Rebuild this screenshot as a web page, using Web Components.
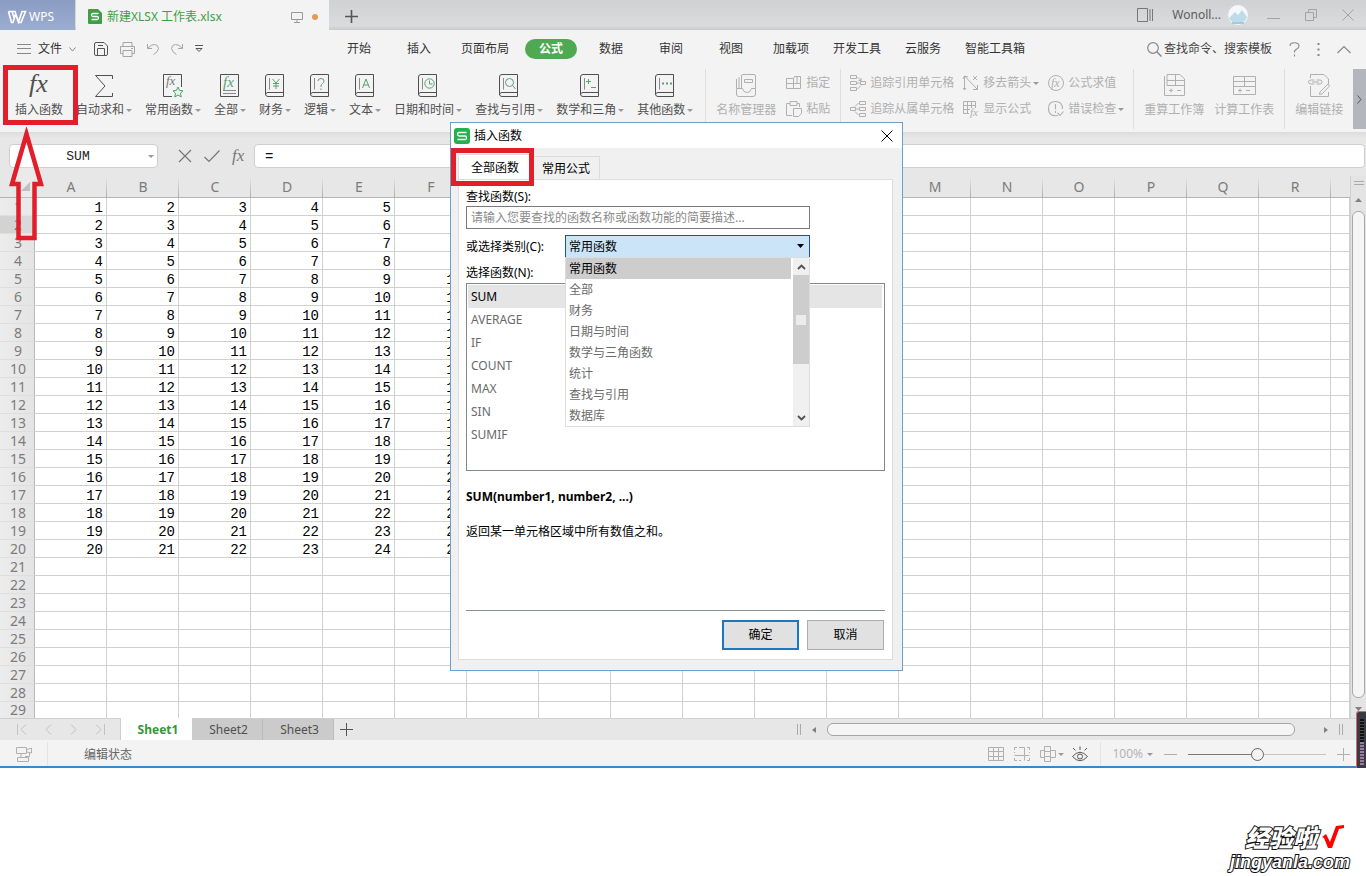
<!DOCTYPE html>
<html lang="zh-CN">
<head>
<meta charset="utf-8">
<title>新建XLSX 工作表.xlsx</title>
<style>
html, body { margin: 0; padding: 0; background: #fff; }
body { font: 12px/16px "Noto Sans", "Noto Sans CJK SC", sans-serif; color: #333; overflow-x: hidden; }
</style>
</head>
<body>
<wps-app></wps-app>
<page-mark></page-mark>

<script>
const BASE = `
*, *::before, *::after { box-sizing: border-box; }
button, input, select { font: inherit; color: inherit; margin: 0; padding: 0; border: 0; background: none; outline: none; border-radius: 0; }
button { cursor: pointer; white-space: nowrap; }
ul { list-style: none; margin: 0; padding: 0; }
ui-icon { flex: none; }
`;
function define(name, css, html) {
  customElements.define(name, class extends HTMLElement {
    constructor() {
      super();
      this.attachShadow({ mode: 'open' });
    }
    connectedCallback() {
      if (this.shadowRoot.childNodes.length) return;
      const t = document.createElement('template');
      t.innerHTML = `<style>${BASE}${css}</style>` + (typeof html === 'function' ? html(this) : html);
      this.shadowRoot.append(t.content.cloneNode(true));
    }
  });
}

/* ---------- icons: [width, height, markup] ---------- */
const book = inner => `<path d="M18.500 .5V22.500H3Q.5 22.500 .5 20V3Q.5 .5 3 .5ZM.5 20.500Q.8 18.500 3 18.500H18.500"/><path d="M4.500 4V15.500" stroke="#8a8a8a"/><g stroke="#5b9f75">${inner}</g>`;
const gtext = (t, x, y, s, extra = '') => `<text x="${x}" y="${y}" font-size="${s}" fill="currentColor" stroke="none" ${extra}>${t}</text>`;
const FX = 'font-family="Liberation Serif" font-style="italic"';
const ICONS = {
  wps: [18, 14, '<g stroke="#fff" stroke-width="1.600"><path d="M.5 1.500H7L10.500 12L14 1.500H17.500L13 12.500H10.500L7.500 4L5 12.500H3.500L.5 1.500M4 1.500L6.500 9"/></g>'],
  sheetfile: [14, 15, '<path d="M1 0H10L14 4V14Q14 15 13 15H1Q0 15 0 14V1Q0 0 1 0Z" fill="#3f9f45" stroke="none"/><path d="M10.500 4.500H5Q3.500 4.500 3.500 6T5 7.500H9Q10.500 7.500 10.500 9T9 10.500H3.500" stroke="#fff" stroke-width="1.300"/>'],
  monitor: [12, 12, '<path d="M.5 1.500H11.500V8.500H.5ZM6 8.500V11M3 11.500H9"/>'],
  plus: [13, 13, '<path d="M6.500 0V13M0 6.500H13" stroke-width="1.600"/>'],
  thinplus: [13, 13, '<path d="M6.500 0V13M0 6.500H13"/>'],
  panel: [16, 14, '<path d="M.5 .5H10.500V13.500H.5ZM13 1V13M15.500 1V13"/>'],
  avatar: [20, 20, '<circle cx="10" cy="10" r="10" fill="#f4f8fa" stroke="none"/><path d="M1 13L7 7L10 10L14 5L19 12Q17 18 10 18T1 13Z" fill="#bddbe8" stroke="none"/><path d="M4 18H16" stroke="#a8c9d8" stroke-width="2"/>'],
  min: [13, 13, '<path d="M0 9.500H13"/>'],
  restore: [12, 12, '<path d="M.5 3.500H8.500V11.500H.5ZM3.500 3.500V.5H11.500V8.500H8.500"/>'],
  close: [12, 12, '<path d="M.5 .5L11.500 11.500M11.500 .5L.5 11.500"/>'],
  burger: [14, 12, '<path d="M0 1.500H14M0 5.500H14M0 10.500H14"/>'],
  chev: [7, 5, '<path d="M.5 .5L3.500 4L6.500 .5"/>'],
  save: [14, 14, '<path d="M.5 2Q.5 .5 2 .5H10L13.500 4V12Q13.500 13.500 12 13.500H2Q.5 13.500 .5 12ZM3.500 13.500V6.500H10.500V13.500M4 3.500H9"/>'],
  print: [15, 15, '<path d="M3 4.500V.5H12V4.500M3 11.500H.5V4.500H14.500V11.500H12M3 8.500H12V14.500H3ZM11 6.500H13"/>'],
  undo: [12, 12, '<path d="M.5 1V5.500H5M1 5Q4 1.500 7.500 1.500T11.500 5.500Q11 9 6.500 11.500"/>'],
  redo: [12, 12, '<path d="M11.500 1V5.500H7M11 5Q8 1.500 4.500 1.500T.5 5.500Q1 9 5.500 11.500"/>'],
  more: [8, 8, '<path d="M0 .5H8M1 3.500H7L4 6.500Z"/>'],
  search: [15, 15, '<circle cx="6" cy="6" r="5.300" stroke-width="1.200"/><path d="M10 10L14.500 14.500" stroke-width="1.500"/>'],
  help: [11, 15, '<path d="M1 4Q1 .7 5.500 .7T10 4Q10 6 7.500 7.200T5.500 10.500M5.500 12.500V14.500" stroke-width="1.100"/>'],
  dots: [3, 13, '<path d="M1.500 0V2M1.500 5.500V7.500M1.500 11V13" stroke-width="2"/>'],
  up: [14, 9, '<path d="M.5 8L7 1.500L13.500 8" stroke-width="1.200"/>'],
  fx: [26, 24, gtext('fx', 3, 18, 26, FX)],
  fxs: [16, 14, gtext('fx', 0, 12, 17, FX)],
  sum: [20, 24, '<path d="M18.500 5V1.500H1.500L11 12L1.500 22.500H18.500V19"/>'],
  common: [20, 24, '<path d="M9 22.500H.5V.5H18.500V13"/><g color="#777">' + gtext('fx', 3, 11, 13, FX) + '</g><path d="M15 13L16.600 16.400L20 16.800L17.500 19.200L18.200 23L15 21L11.800 23L12.500 19.200L10 16.800L13.400 16.400Z" stroke="#4f9f6c" fill="#e6f3ea"/>'],
  all: [20, 24, '<path d="M.5 .5H18.500V22.500H.5Z"/><path d="M3 16.500H16M3 19.500H16" stroke="#888"/><g color="#5b9f75">' + gtext('fx', 3, 13, 15, FX) + '</g>'],
  money: [20, 24, book('<path d="M7.500 5L11 9L14.500 5M11 9V15M8 9.500H14M8 12H14"/>')],
  logic: [20, 24, book('<path d="M8 7Q8 4.500 11 4.500T14 7Q14 8.500 12.500 9.500T11 12V13M11 14.500V16"/>')],
  textb: [20, 24, book('<path d="M7.500 14L11 5L14.500 14M8.500 11H13.500"/>')],
  clock: [20, 24, book('<circle cx="11.500" cy="9.500" r="4.700"/><path d="M11.500 6.500V10H14.500"/>')],
  lookup: [20, 24, book('<circle cx="10.500" cy="8.500" r="4"/><path d="M13.500 11.500L16.500 15"/>')],
  math: [20, 24, book('<path d="M6 7.500H11M8.500 5V10M11 13.500H16"/>')],
  other: [20, 24, book('<path d="M7 9.500H9M11 9.500H13M15 9.500H17" stroke-width="2"/>')],
  names: [20, 24, '<path d="M.5 5V14M3 3V14M5.500 14V2Q5.500 .5 7 .5H18Q19.500 .5 19.500 2V20Q19.500 22.500 17 22.500H2.500Q.5 22.500 .5 20V14.500H6.500Q7.500 18.500 11 18.500T15.500 14.500H19.500M8.500 5.500H16.500V8.500H8.500Z"/>'],
  assign: [16, 16, '<path d="M7.500 3.500H.5V13.500H14.500V8.500M.5 8.500H14.500V1.500H8.500L7.500 3.500V13.500M11 1.500V8.500"/>'],
  paste: [16, 16, '<path d="M4 2.500H.5V14.500H6M11 2.500H13.500V6M4 .5H11V4.500H4ZM7.500 7.500H15.500V12.500L12.500 15.500H7.500Z"/>'],
  prec: [16, 16, '<path d="M.5 .5H6.500V3.500H.5ZM.5 6.500H6.500V9.500H.5ZM.5 12.500H6.500V15.500H.5ZM10.500 6.500H15.500V9.500H10.500ZM7.500 2L11 5.500M11 3V5.500H8.500M7.500 14L11 10.500M7 8H10"/>'],
  dep: [16, 16, '<path d="M9.500 .5H15.500V3.500H9.500ZM9.500 6.500H15.500V9.500H9.500ZM9.500 12.500H15.500V15.500H9.500ZM.5 6.500H5.500V9.500H.5ZM8.500 2L5 5.500M8.500 14L5 10.500M6 8H9"/>'],
  arrows: [16, 16, '<path d="M1.500 15V1L14.500 14.500M0 4L1.500 1L5 2M0 13L1.500 15L3 13M14.500 10V14.500H10M10 1L14 5M14 1L10 5"/>'],
  showf: [16, 16, '<path d="M12.500 7V.5H.5V12.500H6M.5 4.500H12.500M.5 8.500H7M4.500 .5V12.500M8.500 .5V7"/>' + gtext('fx', 7, 15, 11, FX)],
  evalf: [16, 16, '<circle cx="8" cy="8" r="7.500"/>' + gtext('fx', 3, 12, 12, FX)],
  err: [16, 16, '<path d="M10 14.500Q.5 16 .5 7.500Q.5 .5 7.500 .5T14.500 8M7.500 3V8.500M7.500 10V12M9.500 12L12 14.500L15.500 10.500" stroke-width="1.100"/>'],
  calcbook: [21, 24, '<path d="M.5 20V2M3 .5H16L20.500 5V11.500H3ZM.5 11.500V21.500H20.500V11.500M11.500 .5V11.500M3 6.500H20.500M5 16.500H9M7 14.500V18.500M13 16.500H17"/>'],
  calcsheet: [23, 24, '<path d="M.5 2.500H22.500V20.500H.5ZM.5 7.500H22.500M.5 12.500H22.500M11.500 2.500V12.500M5 16.500H9M7 14.500V18.500M13 16.500H17"/>'],
  link: [22, 24, '<path d="M2.500 4V.5H16L20.500 5V10M2.500 12V22.500H20.500V18M6.500 6H3Q.5 6 .5 8T3 10H6.500M8.500 6H12Q14 6 14 8T12 10H8.500M4 8H11M12 18L20 10L21.500 12L14 20L11.500 20.500Z"/>'],
  right: [5, 9, '<path d="M.5 .5L4 4.500L.5 8.500"/>'],
  cross: [14, 14, '<path d="M1 1L13 13M13 1L1 13" stroke-width="1.200"/>'],
  check: [16, 14, '<path d="M.5 8L5 12.500L15.500 1.500" stroke-width="1.200"/>'],
  first: [10, 11, '<path d="M.5 0V11M9 .5L4 5.500L9 10.500"/>'],
  prev: [7, 11, '<path d="M6 .5L1 5.500L6 10.500"/>'],
  next: [7, 11, '<path d="M1 .5L6 5.500L1 10.500"/>'],
  last: [10, 11, '<path d="M9.500 0V11M1 .5L6 5.500L1 10.500"/>'],
  bars: [4, 11, '<path d="M.5 0V11M3.500 0V11"/>'],
  hbars: [10, 4, '<path d="M0 .5H10M0 3.500H10" stroke="#aaa"/>'],
  tl: [4, 6, '<path d="M4 0V6L0 3Z" fill="currentColor" stroke="none"/>'],
  tr: [4, 6, '<path d="M0 0V6L4 3Z" fill="currentColor" stroke="none"/>'],
  tu: [7, 4, '<path d="M0 4H7L3.500 0Z" fill="currentColor" stroke="none"/>'],
  td: [7, 4, '<path d="M0 0H7L3.500 4Z" fill="currentColor" stroke="none"/>'],
  macro: [16, 16, '<path d="M.5 1.500H10.500V7.500H.5ZM5 7.500V11M1.500 11.500H12.500V15.500H1.500ZM11 3.500L15.500 2V7L11 6M13.500 7V10.500H9"/>'],
  v1: [16, 14, '<path d="M.5 .5H15.500V13.500H.5ZM.5 4.500H15.500M.5 9.500H15.500M5.500 .5V13.500M10.500 .5V13.500"/>'],
  v2: [16, 14, '<path d="M.5 3V.5H3M5 .5H10.500V8.500H.5M.5 5V6M13 .5H15.500V3M10.500 8.500H15.500M15.500 5V6M.5 11V13.500H3M5 13.500H7M10.500 8.500V13.500M13 13.500H15.500V11"/>'],
  v3: [16, 16, '<path d="M4.500 .5H10.500V15.500H4.500ZM4.500 5.500H10.500M4.500 10.500H10.500M4 4.500H.5V11.500H4M11 4.500H15.500V11.500H11"/>'],
  eye: [16, 16, '<path d="M.5 10.500Q8 2 15.500 10.500Q8 19 .5 10.500Z"/><circle cx="8" cy="10.500" r="2.500"/><path d="M8 .5V4M1 2L3.500 4.500M15 2L12.500 4.500"/>'],
  minus: [13, 3, '<path d="M0 1.500H13"/>'],
  applogo: [16, 16, '<rect width="16" height="16" rx="3" fill="#22b14c" stroke="none"/><path d="M12.500 4.500H5Q3.500 4.500 3.500 6T5 8H11Q12.500 8 12.500 9.800T11 11.500H3.500" stroke="#fff" stroke-width="1.300"/>'],
  sup: [9, 6, '<path d="M1 5L4.500 1.500L8 5" stroke-width="1.800"/>'],
  sdown: [9, 6, '<path d="M1 1L4.500 4.500L8 1" stroke-width="1.800"/>']
};
define('ui-icon', ':host{display:inline-flex} svg{display:block;overflow:visible}', el => {
  const [w, h, m] = ICONS[el.getAttribute('name')];
  return `<svg width="${w}" height="${h}" viewBox="0 0 ${w} ${h}" fill="none" stroke="currentColor" aria-hidden="true">${m}</svg>`;
});
const ic = n => `<ui-icon name="${n}"></ui-icon>`;

/* ---------- title bar ---------- */
define('title-bar', `
:host { display: flex; height: 30px; background: linear-gradient(#d0d1d3, #dadbdc 85%, #c9cacb); color: #5d5d5d; }
button { display: flex; align-items: center; }
.home { width: 75px; padding: 3px 0 0 8px; gap: 3px; background: linear-gradient(#8b9cc3, #9badd0); color: #fff; }
.doc { width: 253px; background: #f3f3f3; color: #3f9f45; padding: 3px 11px 0 12px; margin-left: 1px; gap: 5px; }
.doc span { flex: 1; text-align: left; }
.doc ui-icon[name=monitor] { color: #999; }
i { width: 6px; height: 6px; border-radius: 3px; background: #e39a55; margin-left: 4px; }
.add { padding: 2px 16px 0; color: #555; }
.right { margin-left: auto; display: flex; align-items: center; padding-right: 12px; color: #777; }
.user { gap: 7px; margin: 0 19px; color: #5d5d5d; }
.win { display: flex; align-items: center; gap: 25px; color: #a3a3a3; }
`, `
<button class="home">${ic('wps')}<span>WPS</span></button>
<button class="doc">${ic('sheetfile')}<span>新建XLSX 工作表.xlsx</span>${ic('monitor')}<i></i></button>
<button class="add" aria-label="新建">${ic('plus')}</button>
<div class="right"><button aria-label="面板">${ic('panel')}</button>
<button class="user"><span>Wonoll...</span>${ic('avatar')}</button>
<div class="win"><button aria-label="最小化">${ic('min')}</button><button aria-label="还原">${ic('restore')}</button><button aria-label="关闭">${ic('close')}</button></div></div>`);

/* ---------- menu row ---------- */
define('menu-bar', `
:host { display: flex; height: 36px; padding-top: 2px; box-sizing: border-box; align-items: center; background: #f3f3f3; color: #333; }
button { display: flex; align-items: center; justify-content: center; height: 20px; }
.left { display: flex; align-items: center; width: 329px; padding-left: 17px; gap: 12px; color: #a5a5a5; flex: none; }
.file { gap: 7px; color: #333; margin-right: 6px; }
.file ui-icon { color: #888; }
.dark { color: #555; }
nav { display: flex; flex: none; }
nav button { min-width: 52px; padding: 0 8px; margin: 0 4px; border-radius: 10px; }
nav button[aria-current] { background: #4fa953; color: #fff; font-weight: 700; }
.right { display: flex; align-items: center; gap: 17px; margin-left: auto; padding-right: 15px; color: #888; }
.find { gap: 2px; } .find span { color: #444; }
`, `
<div class="left"><button class="file">${ic('burger')}<span>文件</span>${ic('chev')}</button>
<button class="dark" aria-label="保存">${ic('save')}</button><button aria-label="打印">${ic('print')}</button><button aria-label="撤销">${ic('undo')}</button><button aria-label="恢复">${ic('redo')}</button><button class="dark" aria-label="更多">${ic('more')}</button></div>
<nav>${'开始 插入 页面布局 公式 数据 审阅 视图 加载项 开发工具 云服务 智能工具箱'.split(' ').map(t => `<button${t === '公式' ? ' aria-current="page"' : ''}>${t}</button>`).join('')}</nav>
<div class="right"><button class="find">${ic('search')}<span>查找命令、搜索模板</span></button><button aria-label="帮助">${ic('help')}</button><button aria-label="选项">${ic('dots')}</button><button aria-label="折叠">${ic('up')}</button></div>`);

/* ---------- ribbon ---------- */
const caret = 'i{width:0;height:0;border:solid transparent;border-width:3px 3px 0;border-top-color:#999;margin-left:2px}';
define('ribbon-button', `
:host { display: block; flex: none; color: #505050; }
:host([off]) { color: #b0b0b0; }
button { display: flex; flex-direction: column; align-items: center; gap: 4px; }
.icon { display: flex; height: 24px; }
.label { display: flex; align-items: center; height: 16px; }
:host([small]) button { flex-direction: row; height: 18px; }
:host([small]) .icon { height: 16px; }
${caret}
`, el => `<button><span class="icon">${ic(el.getAttribute('icon'))}</span><span class="label"><slot></slot>${el.hasAttribute('menu') ? '<i></i>' : ''}</span></button>`);
define('ribbon-group', `
:host { display: flex; flex: none; gap: 10px; padding: 5px 10px 0; border-right: 1px solid #dedede; }
:host([main]) { gap: 13px; padding: 5px 12px 0 15px; }
:host([tight]) { gap: 9px; padding: 5px 9px 0; }
:host([end]) { border: 0; padding-right: 0; }
::slotted(div) { display: flex; flex-direction: column; gap: 8px; }
`, '<slot></slot>');
const rb = (icon, text, attrs = '') => `<ribbon-button icon="${icon}" ${attrs}>${text}</ribbon-button>`;
define('ribbon-bar', `
:host { display: flex; height: 66px; padding: 3px 0; box-sizing: border-box; background: #f3f3f3; overflow: hidden; }
.more { width: 13px; margin-left: auto; background: #b4b6be; color: #555; display: flex; align-items: center; justify-content: center; flex: none; }
`, `
<ribbon-group main>${rb('fx', '插入函数')}${rb('sum', '自动求和', 'menu')}${rb('common', '常用函数', 'menu')}${rb('all', '全部', 'menu')}${rb('money', '财务', 'menu')}${rb('logic', '逻辑', 'menu')}${rb('textb', '文本', 'menu')}${rb('clock', '日期和时间', 'menu')}${rb('lookup', '查找与引用', 'menu')}${rb('math', '数学和三角', 'menu')}${rb('other', '其他函数', 'menu')}</ribbon-group>
<ribbon-group>${rb('names', '名称管理器', 'off')}<div>${rb('assign', '指定', 'off small')}${rb('paste', '粘贴', 'off small')}</div></ribbon-group>
<ribbon-group tight><div>${rb('prec', '追踪引用单元格', 'off small')}${rb('dep', '追踪从属单元格', 'off small')}</div><div>${rb('arrows', '移去箭头', 'off small menu')}${rb('showf', '显示公式', 'off small')}</div><div>${rb('evalf', '公式求值', 'off small')}${rb('err', '错误检查', 'off small menu')}</div></ribbon-group>
<ribbon-group>${rb('calcbook', '重算工作簿', 'off')}${rb('calcsheet', '计算工作表', 'off')}</ribbon-group>
<ribbon-group end>${rb('link', '编辑链接', 'off')}</ribbon-group>
<button class="more" aria-label="向右">${ic('right')}</button>`);

/* ---------- formula bar ---------- */
define('formula-bar', `
:host { display: flex; align-items: center; padding: 12px 1px 8px 9px; background: linear-gradient(#dcdcdc, #e7e7e7 6px); color: #777; }
.name { display: flex; align-items: center; width: 149px; height: 24px; background: #fff; border: 1px solid #cfcfcf; border-radius: 4px; padding-right: 3px; }
.name input { flex: 1; min-width: 0; padding-top: 2px; text-align: center; font-family: "Liberation Mono", monospace; font-size: 13px; color: #222; }
${caret}
.tools { display: flex; align-items: center; gap: 12px; margin: 0 6px 0 20px; }
.tools button { display: flex; }
.value { flex: 1; min-width: 0; height: 24px; background: #fff; border: 1px solid #cfcfcf; border-radius: 4px; padding: 2px 10px 0; font-family: "Liberation Mono", monospace; font-size: 14px; color: #111; }
`, `
<div class="name"><input aria-label="名称框" value="SUM"><i></i></div>
<div class="tools"><button aria-label="取消">${ic('cross')}</button><button aria-label="输入">${ic('check')}</button><button aria-label="插入函数">${ic('fxs')}</button></div>
<input class="value" aria-label="编辑栏" value="=">`);

/* ---------- grid ---------- */
const COLS = 'ABCDEFGHIJKLMNOPQR'.split('');
define('sheet-grid', `
:host { display: flex; background: #e7e7e7; }
.view { flex: 1; min-width: 0; overflow: hidden; }
table { border-collapse: separate; border-spacing: 0; table-layout: fixed; width: 100%; min-width: 1350px; background: #fff; }
th, td { padding: 0; line-height: 17px; height: 18px; font-weight: 400; border-bottom: 1px solid #d0d0d0; }
thead th { height: 22px; line-height: 21px; font-size: 14px; color: #7c7c7c; border-bottom-color: #b4b4b4; background: linear-gradient(#e7e7e7, #b0b0b0) right / 1px 100% no-repeat #e7e7e7; }
thead th:last-child { background: #e7e7e7; }
.corner::after { content: ""; display: block; width: 0; height: 0; margin-left: 21px; border: solid transparent; border-width: 0 0 9px 9px; border-bottom-color: #b4b4b4; }
tbody th { font-size: 14px; color: #7c7c7c; background: linear-gradient(90deg, #ececec, #e4e4e4); border-right: 1px solid #b8b8b8; border-bottom-color: #dedede; padding-left: 2px; }
tbody th.on { background: #d3d3d3; }
td { border-right: 1px solid #d0d0d0; padding: 3px 3px 0 0; text-align: right; font: 14px/14px "Liberation Mono", monospace; color: #000; }
tbody tr:last-child > * { border-bottom: 0; height: 16px; line-height: 16px; padding-top: 0; }
.scroll { width: 16px; display: flex; flex-direction: column; align-items: center; color: #808080; border-left: 1px solid #d0d0d0; background: #e4e4e4; padding: 5px 0 7px; gap: 13px; }
.track { flex: 1; width: 13px; display: flex; flex-direction: column; align-items: center; gap: 9px; }
.thumb { flex: 1; width: 13px; background: #f5f5f5; border: 1px solid #a9a9a9; border-radius: 6px; }
`, () => {
  const cols = `<col style="width:35px">${COLS.map(() => '<col style="width:72px">').join('')}<col>`;
  const head = `<tr><th class="corner"></th>${COLS.map((c, i) => `<th scope="col">${i > 5 && i < 12 ? '' : c}</th>`).join('')}<th></th></tr>`;
  let rows = '';
  for (let r = 1; r <= 29; r++)
    rows += `<tr><th scope="row"${r === 2 ? ' class="on"' : ''}>${r}</th>${COLS.map((c, i) => `<td>${r <= 20 && i < 6 ? r + i : ''}</td>`).join('')}<td></td></tr>`;
  return `<div class="view"><table><colgroup>${cols}</colgroup><thead>${head}</thead><tbody>${rows}</tbody></table></div>
  <div class="scroll">${ic('hbars')}<div class="track">${ic('tu')}<div class="thumb"></div>${ic('td')}</div></div>`;
});

/* ---------- sheet tabs ---------- */
define('sheet-tabs', `
:host { display: flex; height: 22px; box-sizing: border-box; background: #e7e7e7; border-top: 1px solid #cfcfcf; }
.nav { display: flex; align-items: center; gap: 18px; width: 121px; padding-left: 17px; color: #c2c2c2; flex: none; border-right: 1px solid #cfcfcf; }
button { display: flex; align-items: center; justify-content: center; }
.tab { width: 71px; padding: 1px 0 0 3px; background: #cbcbcb; color: #505050; border-right: 1px solid #bbb; flex: none; }
.tab[aria-selected=true] { background: #fff; color: #35973a; font-weight: 700; border: 0; margin-top: -1px; }
.add { padding: 0 6px; color: #555; }
.scroll { display: flex; align-items: center; gap: 11px; width: 546px; margin: 0 23px 0 auto; color: #808080; }
.scroll > ui-icon[name=bars] { color: #aaa; }
.thumb { flex: 1; height: 13px; background: #f5f5f5; border: 1px solid #a5a5a5; border-radius: 6px; margin-right: 18px; }
`, `
<div class="nav"><button aria-label="首页">${ic('first')}</button><button aria-label="上一页">${ic('prev')}</button><button aria-label="下一页">${ic('next')}</button><button aria-label="末页">${ic('last')}</button></div>
<button class="tab" role="tab" aria-selected="true">Sheet1</button><button class="tab" role="tab">Sheet2</button><button class="tab" role="tab">Sheet3</button>
<button class="add" aria-label="新建工作表">${ic('thinplus')}</button>
<div class="scroll">${ic('bars')}${ic('tl')}<div class="thumb"></div>${ic('tr')}${ic('bars')}</div>`);

/* ---------- status bar ---------- */
define('status-bar', `
:host { display: flex; align-items: center; height: 28px; box-sizing: border-box; background: #f3f3f3; border-bottom: 2px solid #3f86c4; padding: 2px 16px 0; color: #b0b0b0; }
button { display: flex; align-items: center; }
.mode { padding-right: 15px; height: 24px; display: flex; align-items: center; border-right: 1px solid #e3e3e3; }
.state { margin-left: 36px; padding-top: 2px; color: #666; }
.views { margin-left: auto; display: flex; align-items: center; gap: 10px; height: 24px; padding-right: 12px; border-right: 1px solid #e3e3e3; }
${caret}
.eye { color: #555; margin-left: -2px; }
.zoom { display: flex; align-items: center; padding-left: 11px; gap: 11px; }
.pct { font: 12px/16px "Open Sans", sans-serif; }
.pct i { margin-left: 4px; }
input { appearance: none; width: 138px; height: 14px; }
input::-webkit-slider-runnable-track { height: 1px; background: linear-gradient(90deg, #777 50%, #c4c4c4 50%); }
input::-webkit-slider-thumb { appearance: none; width: 13px; height: 13px; margin-top: -6px; border: 1px solid #666; border-radius: 7px; background: #f3f3f3; }
`, `
<div class="mode"><button aria-label="宏">${ic('macro')}</button></div><span class="state">编辑状态</span>
<div class="views"><button aria-label="普通视图">${ic('v1')}</button><button aria-label="分页预览">${ic('v2')}</button><button aria-label="页面布局">${ic('v3')}<i></i></button><button class="eye" aria-label="护眼模式">${ic('eye')}</button></div>
<div class="zoom"><button class="pct">100%<i></i></button><button aria-label="缩小">${ic('minus')}</button><input type="range" aria-label="缩放" min="0" max="200" value="100"><button aria-label="放大">${ic('thinplus')}</button></div>`);

/* ---------- insert-function dialog ---------- */
const KINDS = ['常用函数', '全部', '财务', '日期与时间', '数学与三角函数', '统计', '查找与引用', '数据库'];
const FUNCS = ['SUM', 'AVERAGE', 'IF', 'COUNT', 'MAX', 'SIN', 'SUMIF'];
define('function-dialog', `
:host { display: block; box-sizing: border-box; width: 453px; background: #f0f0f0; border: 1px solid #69a0cc; color: #000; padding-bottom: 10px; }
header { display: flex; align-items: center; gap: 4px; height: 25px; padding: 0 9px 0 3px; background: #fff; margin-bottom: 6px; }
header span { flex: 1; } header button { display: flex; }
.tabs { display: flex; align-items: flex-end; padding-left: 7px; }
.tabs button { height: 23px; padding: 1px 9px 0; border: 1px solid #dcdcdc; border-bottom: 0; background: #f0f0f0; }
.tabs button[aria-selected=true] { height: 25px; width: 74px; background: #fff; }
.panel { margin: 0 9px 0 7px; background: #fff; border: 1px solid #dcdcdc; padding: 8px 7px 9px; }
label { display: block; line-height: 18px; }
.query { display: block; width: 344px; height: 23px; border: 1px solid #7a7a7a; padding: 0 4px; }
.query::placeholder { color: #8a8a8a; }
.row { display: flex; align-items: center; margin: 6px 0 5px; position: relative; }
.row label { width: 99px; line-height: 20px; padding-top: 2px; }
.row select { appearance: none; width: 245px; height: 22px; padding: 0 3px; border: 1px solid #26547c; border-bottom: 0; background: linear-gradient(#cce4f7, #cce4f7); }
.row > ui-icon { position: absolute; left: 331px; top: 9px; }
.drop { position: absolute; left: 99px; top: 22px; width: 245px; display: flex; background: #fff; border: 1px solid #dcdcdc; z-index: 1; color: #6a6a6a; }
.drop ul { flex: 1; }
.drop li { line-height: 21px; padding-left: 3px; }
.drop li[aria-selected] { background: #cdcdcd; color: #000; margin-right: 2px; }
.bar { width: 16px; display: flex; flex-direction: column; align-items: center; background: #f0f0f0; color: #505050; padding: 6px 0 5px; }
.knob { width: 16px; height: 89px; background: #cdcdcd; margin: 5px 0 auto; display: flex; align-items: center; justify-content: center; }
.knob::after { content: ""; width: 10px; height: 10px; background: #ececec; }
.lbl { line-height: 21px; }
.list { height: 188px; border: 1px solid #828790; padding: 1px 2px 0 1px; color: #6a6a6a; }
.list li { line-height: 23px; padding-left: 3px; }
.list li[aria-selected] { background: #e5e5e5; color: #000; }
.about { height: 140px; padding-top: 16px; border-bottom: 1px solid #8a8f98; }
.about p { margin: 0 0 15px; line-height: 20px; }
footer { display: flex; justify-content: flex-end; gap: 8px; padding: 9px 1px 0 0; }
footer button { width: 77px; height: 30px; background: #e1e1e1; border: 1px solid #adadad; }
footer button.ok { border: 2px solid #1a78c2; }
`, `
<header>${ic('applogo')}<span>插入函数</span><button aria-label="关闭">${ic('close')}</button></header>
<div class="tabs" role="tablist"><button role="tab" aria-selected="true">全部函数</button><button role="tab">常用公式</button></div>
<div class="panel">
<label for="q">查找函数(S):</label>
<input class="query" id="q" placeholder="请输入您要查找的函数名称或函数功能的简要描述...">
<div class="row"><label for="k">或选择类别(C):</label><select id="k">${KINDS.map(k => `<option>${k}</option>`).join('')}</select>${ic('td')}
<div class="drop"><ul role="listbox" aria-label="类别">${KINDS.map((k, i) => `<li role="option"${i ? '' : ' aria-selected="true"'}>${k}</li>`).join('')}</ul><div class="bar">${ic('sup')}<div class="knob"></div>${ic('sdown')}</div></div></div>
<div class="lbl" id="n">选择函数(N):</div>
<ul class="list" role="listbox" aria-labelledby="n">${FUNCS.map((k, i) => `<li role="option"${i ? '' : ' aria-selected="true"'}>${k}</li>`).join('')}</ul>
<div class="about"><p><b>SUM(number1, number2, ...)</b></p><p>返回某一单元格区域中所有数值之和。</p></div>
<footer><button class="ok">确定</button><button>取消</button></footer>
</div>`);

/* ---------- red guide marks ---------- */
define('guide-box', ':host{display:block;box-sizing:border-box;position:absolute;border:5px solid #e11f2b;pointer-events:none}', '');
define('guide-arrow', ':host{display:block;position:absolute;pointer-events:none} svg{display:block}',
  '<svg width="35" height="114" viewBox="0 0 35 114"><path d="M17.500 7L3 57H9.500V111H25.500V57H32Z" fill="#fff" fill-opacity=".15" stroke="#e11f2b" stroke-width="4.500"/></svg>');

define('wps-app', `
:host { display: block; position: relative; }
function-dialog { position: absolute; left: calc(50% - 233px); top: 122px; z-index: 2; }
guide-box, guide-arrow { z-index: 3; }
.one { left: 3px; top: 65px; width: 75px; height: 60px; }
.two { left: calc(50% - 232px); top: 148px; width: 83px; height: 38px; }
guide-arrow { left: 9px; top: 127px; }
.gadget { position: absolute; right: 0; bottom: 0; width: 10px; height: 57px; border: solid #d06a70; border-width: 1px 0 0 1px; border-radius: 3px 0 0 0; background: #3a3a42; z-index: 1; }
.gadget::before, .gadget::after { content: ""; position: absolute; left: 3px; top: 7px; width: 4px; height: 23px; background: repeating-linear-gradient(#111 0 2px, #4a4a52 2px 3px); }
.gadget::after { top: 30px; background: repeating-linear-gradient(#9a7aa6 0 2px, #3c3c42 2px 3px); }
`, `
<title-bar></title-bar><menu-bar></menu-bar><ribbon-bar></ribbon-bar><formula-bar></formula-bar>
<sheet-grid></sheet-grid><sheet-tabs></sheet-tabs><status-bar></status-bar>
<function-dialog role="dialog" aria-label="插入函数"></function-dialog>
<guide-box class="one"></guide-box><guide-box class="two"></guide-box><guide-arrow></guide-arrow>
<div class="gadget"></div>`);

/* ---------- site mark under the window ---------- */
define('page-mark', `
:host { display: flex; flex-direction: column; align-items: flex-end; padding: 55px 16px 0; }
.top { display: flex; align-items: center; gap: 4px; padding-right: 5px; }
b { color: #fff; -webkit-text-stroke: 2px #111; paint-order: stroke fill; font-style: italic; }
.cn { font: italic 900 24px/28px "Noto Sans CJK SC", sans-serif; }
.en { font: italic 700 18px/22px "Liberation Sans", sans-serif; }
`, `
<div class="top"><b class="cn">经验啦</b><svg width="24" height="24" viewBox="0 0 24 24" aria-hidden="true"><path d="M1 12L5 9L9 17L15 1L23 0V3L18 4L11 23H7L3 13Z" fill="#f00"/></svg></div>
<b class="en">jingyanla.com</b>`);
</script>
</body>
</html>
